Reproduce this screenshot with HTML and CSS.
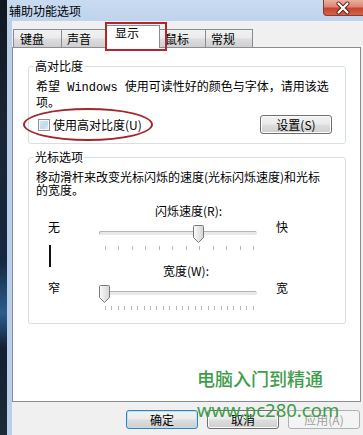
FILE: index.html
```html
<!DOCTYPE html>
<html lang="zh-CN">
<head>
<meta charset="utf-8">
<title>辅助功能选项</title>
<link rel="stylesheet" href="styles.css">
</head>
<body>
<div class="screen">
  <div class="desk"></div>
  <div class="window">
    <div class="titlebar">
      <span class="title">辅助功能选项</span>
      <div class="close">
        <svg width="40" height="16" viewBox="0 0 40 16">
          <path d="M15.5 3.5 L24.5 12.5 M24.5 3.5 L15.5 12.5" stroke="#5a1e18" stroke-width="4" stroke-linecap="round"/>
          <path d="M15.5 3.5 L24.5 12.5 M24.5 3.5 L15.5 12.5" stroke="#ffffff" stroke-width="2.2" stroke-linecap="round"/>
        </svg>
      </div>
    </div>
    <div class="client">
      <div class="tabs">
        <div class="tab t1">键盘</div>
        <div class="tab t2">声音</div>
        <div class="tab active">显示<span class="mark-rect"></span></div>
        <div class="tab t4">鼠标</div>
        <div class="tab t5">常规</div>
      </div>
      <div class="panel">
        <fieldset class="group g1">
          <legend>高对比度</legend>
          <p class="desc">希望<span class="mono"> Windows </span>使用可读性好的颜色与字体，请用该选<br>项。</p>
          <div class="hc-row">
            <label class="check"><span class="box"></span><span class="check-label">使用高对比度(U)</span></label>
            <button class="btn set">设置(S)</button>
            <span class="mark-ellipse"></span>
          </div>
        </fieldset>
        <fieldset class="group g2">
          <legend>光标选项</legend>
          <p class="desc">移动滑杆来改变光标闪烁的速度(光标闪烁速度)和光标<br>的宽度。</p>
          <div class="caption c1">闪烁速度(R):</div>
          <div class="srow r1">
            <div class="lcol"><span class="lab">无</span></div>
            <div class="slider">
              <div class="rail">
                <div class="track"></div>
                <svg class="thumb" style="left:94px" width="11" height="18" viewBox="0 0 11 18">
                  <defs><linearGradient id="tg1" x1="0" y1="0" x2="1" y2="0"><stop offset="0" stop-color="#fbfbfb"/><stop offset="1" stop-color="#d4d4d4"/></linearGradient></defs>
                  <path d="M0.5 1.5 Q0.5 0.5 1.5 0.5 H9.5 Q10.5 0.5 10.5 1.5 V12.5 L5.5 17.5 L0.5 12.5 Z" fill="url(#tg1)" stroke="#7a7a7a"/>
                </svg>
              </div>
              <div class="ticks t12">
                <i></i><i></i><i></i><i></i><i></i><i></i><i></i><i></i><i></i><i></i><i></i><i></i>
              </div>
            </div>
            <div class="rlab">快</div>
          </div>
          <div class="mid">
            <div class="lcol"><span class="cursor-line"></span></div>
            <div class="caption c2">宽度(W):</div>
          </div>
          <div class="srow r2">
            <div class="lcol"><span class="lab">窄</span></div>
            <div class="slider">
              <div class="rail">
                <div class="track"></div>
                <svg class="thumb" style="left:0px" width="11" height="18" viewBox="0 0 11 18">
                  <defs><linearGradient id="tg2" x1="0" y1="0" x2="1" y2="0"><stop offset="0" stop-color="#fbfbfb"/><stop offset="1" stop-color="#d4d4d4"/></linearGradient></defs>
                  <path d="M0.5 1.5 Q0.5 0.5 1.5 0.5 H9.5 Q10.5 0.5 10.5 1.5 V12.5 L5.5 17.5 L0.5 12.5 Z" fill="url(#tg2)" stroke="#7a7a7a"/>
                </svg>
              </div>
              <div class="ticks t24">
                <i></i><i></i><i></i><i></i><i></i><i></i><i></i><i></i><i></i><i></i><i></i><i></i>
                <i></i><i></i><i></i><i></i><i></i><i></i><i></i><i></i><i></i><i></i><i></i><i></i>
              </div>
            </div>
            <div class="rlab">宽</div>
          </div>
        </fieldset>
      </div>
      <div class="buttons">
        <button class="btn default">确定</button>
        <button class="btn">取消</button>
        <button class="btn disabled">应用(A)</button>
      </div>
    </div>
    <div class="watermark">
      <div class="wm1">电脑入门到精通</div>
      <div class="wm2">www.pc280.com</div>
    </div>
  </div>
</div>
</body>
</html>
```

FILE: styles.css
```css
* { box-sizing: border-box; }

html, body {
  margin: 0;
  padding: 0;
  background: #0e1826;
}

body {
  font-family: "Noto Sans CJK SC", "Noto Sans", sans-serif;
  font-size: 12px;
  color: #000;
}

.screen {
  display: flex;
  width: 363px;
  height: 435px;
  overflow: hidden;
}

.desk {
  width: 7px;
  flex: none;
  background: linear-gradient(180deg, #101722 0%, #1a2636 30%, #14283f 60%, #2c5d8f 72%, #132033 80%, #1d2a38 100%);
}

.window {
  flex: 1;
  position: relative;
  display: flex;
  flex-direction: column;
  background: linear-gradient(90deg, #b9cfea 0%, #c6d9ef 40%, #c9dcf1 100%);
}

.titlebar {
  height: 21px;
  flex: none;
  position: relative;
  display: flex;
  align-items: center;
  padding-left: 2px;
  background: linear-gradient(180deg, #c8dbf1 0%, #bed3ed 100%);
}

.title {
  line-height: 21px;
  font-size: 12px;
  color: #000;
}

.close {
  position: absolute;
  top: 0;
  right: 0;
  width: 40px;
  height: 16px;
  border: 1px solid #8a3a30;
  border-top: none;
  border-right: none;
  border-bottom-left-radius: 4px;
  background: linear-gradient(180deg, #eab0a2 0%, #dd8671 45%, #c8442c 55%, #d0654b 100%);
  overflow: hidden;
}

.close svg {
  display: block;
  margin-left: -1px;
}

.client {
  flex: 1;
  margin-left: 5px;
  background: #f0f0f0;
  display: flex;
  flex-direction: column;
}

.tabs {
  height: 26px;
  display: flex;
  align-items: flex-end;
  padding-left: 1px;
  flex: none;
}

.tab {
  height: 18px;
  border: 1px solid #898c95;
  border-bottom: none;
  line-height: 17px;
  background: linear-gradient(180deg, #f2f2f2 0%, #ebebeb 45%, #dcdcdc 55%, #cfcfcf 100%);
  white-space: nowrap;
  position: relative;
}

.t1 { width: 49px; padding-left: 6px; }
.t2 { width: 46px; padding-left: 5px; border-left: none; }
.t4 { width: 48px; padding-left: 6px; }
.t5 { width: 47px; padding-left: 5px; border-left: none; }

.tab.active {
  width: 54px;
  height: 23px;
  margin: 0 -2px -1px -2px;
  padding-left: 8px;
  line-height: 14px;
  background: #ffffff;
  z-index: 2;
}

.mark-rect {
  position: absolute;
  left: -2px;
  top: -4px;
  width: 62px;
  height: 29px;
  border: 2px solid #b3262b;
}

.panel {
  height: 355px;
  flex: none;
  margin-right: 2px;
  border: 1px solid #898c95;
  background: #ffffff;
  padding: 11px 14px 0 15px;
  display: flex;
  flex-direction: column;
}

.group {
  margin: 0;
  border: 1px solid #d5dfe5;
  border-radius: 3px;
  padding: 0 7px 0 7px;
  min-width: 0;
}

.group legend {
  padding: 0 1px;
  margin-left: -2px;
  line-height: 14px;
  font-size: 12px;
}

.desc {
  margin: 0;
  line-height: 13px;
  white-space: nowrap;
}

.mono {
  font-family: "Liberation Mono", monospace;
  font-size: 12px;
}

.g1 { padding-bottom: 9px; }
.g1 .desc { margin-top: 6px; }

.hc-row {
  position: relative;
  margin-top: 7px;
  height: 19px;
  display: flex;
  align-items: center;
  justify-content: space-between;
}

.check {
  display: flex;
  align-items: center;
  margin-left: 2px;
}

.box {
  width: 12px;
  height: 12px;
  border: 1px solid #8e8f8f;
  background: linear-gradient(135deg, #d8e6f3 0%, #c4d9ee 60%, #e8f0f8 100%);
  box-shadow: inset 0 0 0 1px #f4f8fc;
}

.check-label {
  margin-left: 3px;
  line-height: 13px;
}

.mark-ellipse {
  position: absolute;
  left: -13px;
  top: -7px;
  width: 130px;
  height: 33px;
  border: 2px solid #a3262b;
  border-radius: 50%;
  pointer-events: none;
}

.btn {
  font-family: "Noto Sans CJK SC", "Noto Sans", sans-serif;
  font-size: 12px;
  color: #000;
  width: 72px;
  height: 19px;
  padding: 0;
  line-height: 16px;
  border: 1px solid #707070;
  border-radius: 3px;
  background: linear-gradient(180deg, #f2f2f2 0%, #ebebeb 45%, #dddddd 55%, #cfcfcf 100%);
  box-shadow: inset 0 0 0 1px #fcfcfc;
}

.btn.set { margin-right: 6px; }

.btn.default {
  border-color: #3c7fb1;
  box-shadow: inset 0 0 0 1px #b6e4f7;
  background: linear-gradient(180deg, #eaf6fd 0%, #d9f0fc 45%, #bee6fd 55%, #a7d9f5 100%);
  background: linear-gradient(180deg, #f2f2f2 0%, #ebebeb 45%, #dddddd 55%, #cfcfcf 100%);
}

.btn.disabled {
  border-color: #adb2b5;
  background: #f4f4f4;
  color: #a0a0a0;
  box-shadow: none;
}

.g2 {
  margin-top: 6px;
  padding-bottom: 13px;
}

.g2 .desc { margin-top: 6px; }

.caption {
  line-height: 13px;
  white-space: nowrap;
}

.c1 {
  margin-top: 8px;
  padding-left: 119px;
}

.srow {
  display: flex;
}

.lcol {
  width: 63px;
  flex: none;
  padding-left: 12px;
}

.lab {
  display: block;
  line-height: 13px;
}

.r1 .lab, .r1 .rlab { padding-top: 3px; }
.r2 .lab, .r2 .rlab { padding-top: 4px; }

.slider {
  width: 158px;
  flex: none;
  padding-top: 8px;
}

.r2 .slider { padding-top: 8px; }

.rail {
  position: relative;
  height: 18px;
}

.track {
  position: relative;
  top: 6px;
  height: 4px;
  border: 1px solid #b4b4b4;
  border-bottom-color: #e8e8e8;
  border-right-color: #e0e0e0;
  border-radius: 2px;
  background: #e7eaea;
}

.thumb {
  position: absolute;
  top: 0;
  display: block;
}

.ticks {
  margin-top: 3px;
  height: 4px;
  display: flex;
  justify-content: space-between;
  padding: 0 3px 0 6px;
}

.ticks i {
  display: block;
  width: 1px;
  height: 4px;
  background: #b8b8b8;
}

.rlab {
  margin-left: 19px;
  line-height: 13px;
}

.mid {
  display: flex;
  height: 27px;
}

.mid .lcol {
  padding-left: 13px;
}

.cursor-line {
  display: block;
  width: 2px;
  height: 22px;
  margin-top: -5px;
  background: #111;
}

.c2 {
  padding-top: 14px;
  margin-left: 64px;
}

.buttons {
  display: flex;
  justify-content: flex-end;
  gap: 9px;
  margin-top: 8px;
  padding-right: 3px;
}

.watermark {
  position: absolute;
  left: 190px;
  top: 368px;
  color: #3f9c4b;
  font-family: "Noto Sans CJK SC", "Noto Sans", sans-serif;
  pointer-events: none;
  z-index: 5;
}

.wm1 {
  font-size: 18px;
  line-height: 20px;
  letter-spacing: 0px;
  font-weight: 500;
}

.wm2 {
  margin-top: 12px;
  font-size: 18.5px;
  line-height: 20px;
  font-family: "Noto Sans", sans-serif;
}
```
